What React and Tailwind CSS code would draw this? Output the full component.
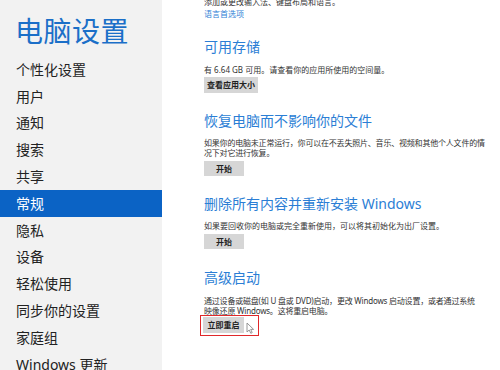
import React from 'react';

const navItems = [
  '个性化设置',
  '用户',
  '通知',
  '搜索',
  '共享',
  '常规',
  '隐私',
  '设备',
  '轻松使用',
  '同步你的设置',
  '家庭组',
  'Windows 更新',
];

const font = { fontFamily: '"Noto Sans", "Noto Sans CJK SC", sans-serif' };

const Button = ({ children, className = '' }) => (
  <div className={`flex items-center justify-center bg-[#d6d6d6] text-[8px] font-bold text-[#222] ${className}`}>
    {children}
  </div>
);

const App = () => (
  <div className="flex w-[500px] h-[370px] overflow-hidden bg-white" style={font}>
    {/* sidebar */}
    <div className="w-[162px] shrink-0 bg-[#f2f2f2] flex flex-col">
      <h1 className="pt-[15px] px-[15px] text-[28px] leading-[33px] text-[#1b6fc8] tracking-[0.5px]">电脑设置</h1>
      <div className="mt-[8px] flex flex-col">
        {navItems.map((item) => (
          <div
            key={item}
            className={`h-[26.8px] flex items-center px-[16px] text-[14px] ${item === '常规' ? 'bg-[#0b63c5] text-white' : 'text-[#222]'}`}
          >
            {item}
          </div>
        ))}
      </div>
    </div>

    {/* content */}
    <div className="flex-1 pl-[42px] text-[#333]">
      <p className="-mt-[4px] text-[8px] leading-[12px]">添加或更改输入法、键盘布局和语言。</p>
      <p className="text-[8px] leading-[12px] text-[#2f7fd6]">语言首选项</p>

      <h2 className="mt-[18px] text-[14px] leading-[18px] text-[#2b7ed5]">可用存储</h2>
      <p className="mt-[9px] text-[8px] leading-[10px]">有 6.64 GB 可用。请查看你的应用所使用的空间量。</p>
      <Button className="mt-[2px] w-[54px] h-[16px]">查看应用大小</Button>

      <h2 className="mt-[19px] text-[14px] leading-[18px] text-[#2b7ed5]">恢复电脑而不影响你的文件</h2>
      <p className="mt-[8px] text-[8px] leading-[9.5px] tracking-[-0.2px]">
        如果你的电脑未正常运行，你可以在不丢失照片、音乐、视频和其他个人文件的情
        <br />
        况下对它进行恢复。
      </p>
      <Button className="mt-[4px] w-[40px] h-[15px]">开始</Button>

      <h2 className="mt-[19px] text-[14px] leading-[18px] text-[#2b7ed5]">删除所有内容并重新安装 Windows</h2>
      <p className="mt-[8px] text-[8px] leading-[10px]">如果要回收你的电脑或完全重新使用，可以将其初始化为出厂设置。</p>
      <Button className="mt-[3px] w-[40px] h-[15px]">开始</Button>

      <h2 className="mt-[20px] text-[14px] leading-[18px] text-[#2b7ed5]">高级启动</h2>
      <p className="mt-[9px] text-[8px] leading-[9.5px] tracking-[-0.2px]">
        通过设备或磁盘(如 U 盘或 DVD)启动，更改 Windows 启动设置，或者通过系统
        <br />
        映像还原 Windows。这将重启电脑。
      </p>
      <div className="relative mt-[0px] -ml-[4px] w-[59px] h-[21px] border-[1.5px] border-[#e0282a] pl-[2px] pt-[1px]">
        <Button className="w-[41px] h-[16px]">立即重启</Button>
        <svg className="absolute left-[45px] top-[6px]" width="9" height="12" viewBox="0 0 9 12">
          <path d="M1 1 L1 10 L3.2 8 L4.8 11.3 L6.2 10.6 L4.7 7.4 L7.6 7.4 Z" fill="#fff" stroke="#8a8a8a" strokeWidth="0.9" strokeLinejoin="round" />
        </svg>
      </div>
    </div>
  </div>
);

export default App;
